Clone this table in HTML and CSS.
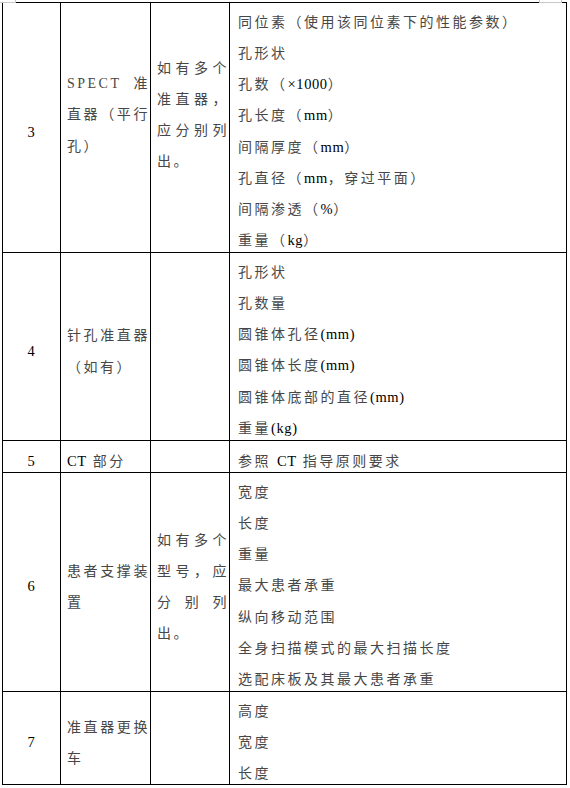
FILE: index.html
```html
<!DOCTYPE html>
<html lang="zh-CN">
<head>
<meta charset="utf-8">
<title>参数表</title>
<link rel="stylesheet" href="styles.css">
</head>
<body>
<div class="sheet">
  <div class="mark mark-left"></div>
  <div class="mark mark-right"></div>
  <div class="grid">
    <div class="c num"><span class="en">3</span></div>
    <div class="c side name up"><p>SPECT 准直器（平行孔）</p></div>
    <div class="c side note up"><p>如有多个准直器，应分别列出。</p></div>
    <div class="c list">
      <p>同位素（使用该同位素下的性能参数）</p>
      <p>孔形状</p>
      <p>孔数（<span class="en">×1000</span>）</p>
      <p>孔长度（<span class="en">mm</span>）</p>
      <p>间隔厚度（<span class="en">mm</span>）</p>
      <p>孔直径（<span class="en">mm</span>，穿过平面）</p>
      <p>间隔渗透（<span class="en">%</span>）</p>
      <p>重量（<span class="en">kg</span>）</p>
    </div>

    <div class="c num"><span class="en">4</span></div>
    <div class="c side name"><p>针孔准直器（如有）</p></div>
    <div class="c side note"></div>
    <div class="c list">
      <p>孔形状</p>
      <p>孔数量</p>
      <p>圆锥体孔径<span class="en">(mm)</span></p>
      <p>圆锥体长度<span class="en">(mm)</span></p>
      <p>圆锥体底部的直径<span class="en">(mm)</span></p>
      <p>重量<span class="en">(kg)</span></p>
    </div>

    <div class="c num"><span class="en">5</span></div>
    <div class="c side name"><p><span class="en">CT</span> 部分</p></div>
    <div class="c side note"></div>
    <div class="c list single">
      <p>参照 <span class="en">CT</span> 指导原则要求</p>
    </div>

    <div class="c num"><span class="en">6</span></div>
    <div class="c side name"><p>患者支撑装置</p></div>
    <div class="c side note"><p>如有多个型号，应分别列出。</p></div>
    <div class="c list">
      <p>宽度</p>
      <p>长度</p>
      <p>重量</p>
      <p>最大患者承重</p>
      <p>纵向移动范围</p>
      <p>全身扫描模式的最大扫描长度</p>
      <p>选配床板及其最大患者承重</p>
    </div>

    <div class="c num"><span class="en">7</span></div>
    <div class="c side name"><p>准直器更换车</p></div>
    <div class="c side note"></div>
    <div class="c list">
      <p>高度</p>
      <p>宽度</p>
      <p>长度</p>
    </div>
  </div>
</div>
</body>
</html>
```

FILE: styles.css
```css
html, body {
  margin: 0;
  padding: 0;
  background: #fff;
}

body {
  font-family: "Liberation Serif", "Noto Sans CJK SC", serif;
  font-size: 14px;
  color: #474747;
  width: 570px;
  height: 788px;
  overflow: hidden;
}

.sheet {
  position: relative;
  padding: 2px 0 0 2px;
}

.mark {
  position: absolute;
  top: 0;
  height: 2px;
  border-bottom: 1px solid #c8c8c8;
}

.mark-left {
  left: 0;
  width: 15px;
  border-right: 1px solid #c8c8c8;
}

.mark-right {
  left: 539px;
  width: 21px;
  border-left: 1px solid #c8c8c8;
  border-right: 1px solid #c8c8c8;
}

.grid {
  display: inline-grid;
  grid-template-columns: 57px 89px 78px 336px;
  grid-template-rows: 249px 187px 31px 218px 92px;
  gap: 1px;
  padding: 1px;
  background: #000;
}

.c {
  background: #fff;
  line-height: 31.15px;
  letter-spacing: 2.5px;
  min-width: 0;
  min-height: 0;
}

.c p {
  margin: 0;
}

.en {
  color: #000;
  font-size: 14.5px;
  letter-spacing: 0.6px;
}

.num {
  display: flex;
  align-items: center;
  justify-content: center;
  padding-top: 10px;
  letter-spacing: 0;
}

.side {
  display: flex;
  flex-direction: column;
  justify-content: center;
  padding-top: 10px;
  text-align: justify;
  line-break: strict;
}

.side.up {
  padding-top: 0;
  padding-bottom: 25px;
}

.name {
  padding-left: 6px;
  padding-right: 0;
}

.note {
  padding-left: 6px;
  padding-right: 0;
}

.list {
  padding: 4px 0 0 8px;
  white-space: nowrap;
}

.list.single {
  display: flex;
  flex-direction: column;
  justify-content: center;
  padding-top: 10px;
}
```
